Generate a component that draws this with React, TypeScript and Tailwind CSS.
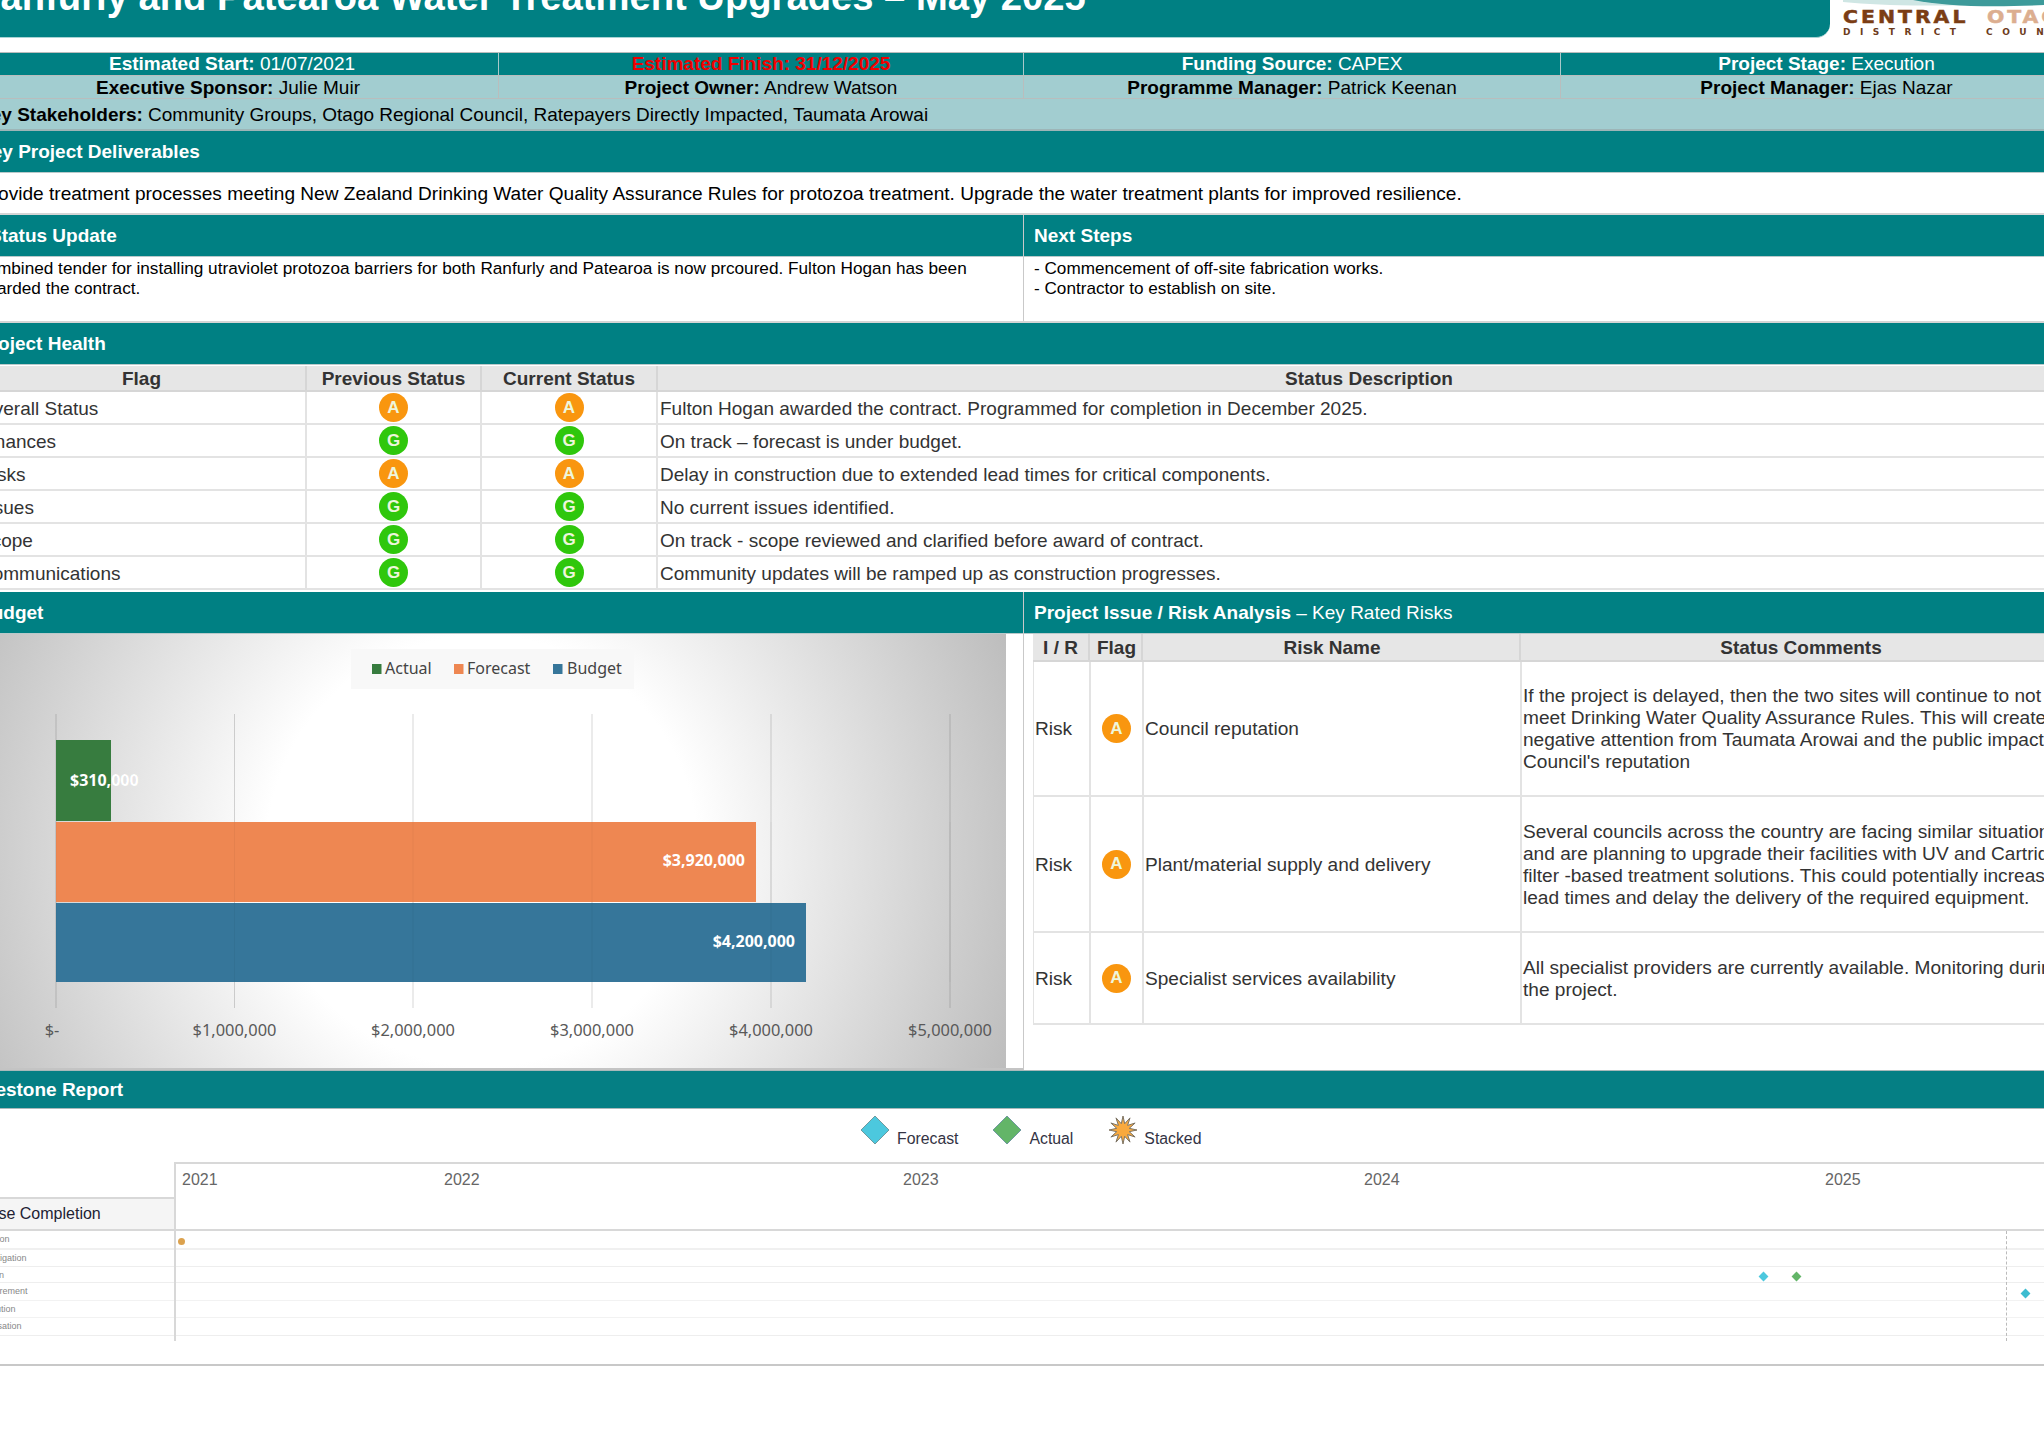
import React from "react";

const Badge = ({ k }: { k: "A" | "G" }) => (
  <span
    className={
      "flex h-[29px] w-[29px] items-center justify-center rounded-full text-[17px] font-bold text-[#eef6dc] " +
      (k === "A" ? "bg-[#f9960f]" : "bg-[#2fc70c]")
    }
  >
    {k}
  </span>
);

const SectionHead = ({ children, pad }: { children: React.ReactNode; pad: string }) => (
  <div
    className={
      "flex h-[42px] items-center border-b border-[#b9c9ca] bg-[#008083] pt-[2px] text-[19px] font-bold text-white " + pad
    }
  >
    {children}
  </div>
);

const health: [string, "A" | "G", "A" | "G", string][] = [
  ["Overall Status", "A", "A", "Fulton Hogan awarded the contract. Programmed for completion in December 2025."],
  ["Finances", "G", "G", "On track – forecast is under budget."],
  ["Risks", "A", "A", "Delay in construction due to extended lead times for critical components."],
  ["Issues", "G", "G", "No current issues identified."],
  ["Scope", "G", "G", "On track - scope reviewed and clarified before award of contract."],
  ["Communications", "G", "G", "Community updates will be ramped up as construction progresses."],
];

const risks = [
  {
    name: "Council reputation",
    h: "h-[135px]",
    lines: [
      "If the project is delayed, then the two sites will continue to not",
      "meet Drinking Water Quality Assurance Rules. This will create",
      "negative attention from Taumata Arowai and the public impacting",
      "Council's reputation",
    ],
  },
  {
    name: "Plant/material supply and delivery",
    h: "h-[136px]",
    lines: [
      "Several councils across the country are facing similar situations",
      "and are planning to upgrade their facilities with UV and Cartridge",
      "filter -based treatment solutions. This could potentially increase",
      "lead times and delay the delivery of the required equipment.",
    ],
  },
  {
    name: "Specialist services availability",
    h: "h-[92px]",
    lines: ["All specialist providers are currently available. Monitoring during", "the project."],
  },
];

const ganttRows = [
  { label: "Initiation", h: "h-[19px]", border: "border-b-2 border-[#f0f0f0]" },
  { label: "Investigation", h: "h-[17px]", border: "border-b border-[#eeeeee]" },
  { label: "Design", h: "h-[16px]", border: "border-b border-[#eeeeee]" },
  { label: "Procurement", h: "h-[18px]", border: "border-b border-[#f2f2f2]" },
  { label: "Execution", h: "h-[17px]", border: "border-b border-[#f2f2f2]" },
  { label: "Finalisation", h: "h-[18px]", border: "border-b border-[#eeeeee]" },
];

const ticks = [
  { x: 56, label: "$-", lx: 52 },
  { x: 234.5, label: "$1,000,000", lx: 234.5 },
  { x: 413, label: "$2,000,000", lx: 413 },
  { x: 592, label: "$3,000,000", lx: 592 },
  { x: 771, label: "$4,000,000", lx: 771 },
  { x: 950, label: "$5,000,000", lx: 950 },
];

const starPoints = Array.from({ length: 24 }, (_, i) => {
  const r = i % 2 === 0 ? 14 : 6.5;
  const a = (i * Math.PI) / 12;
  return `${14 + r * Math.sin(a)},${14 - r * Math.cos(a)}`;
}).join(" ");

const Diamond = ({ fill }: { fill: string }) => (
  <svg width="30" height="30" viewBox="0 0 30 30" className="shrink-0">
    <polygon points="15,1 29,15 15,29 1,15" fill={fill} stroke="#6f9a9f" strokeWidth="1" />
  </svg>
);

export default function App() {
  return (
    <div className="h-[1433px] w-[2044px] overflow-hidden bg-white font-['Liberation_Sans',Arial,sans-serif] text-black">
      <div className="ml-[-42px] flex w-[2134px] flex-col">
        {/* Title band and logo */}
        <div className="flex h-[52px] overflow-hidden">
          <div className="h-[38px] w-[1872px] shrink-0 overflow-hidden rounded-br-[14px] border-b border-[#a9d3d4] bg-[#008083] pl-[15px]">
            <div className="mt-[-24px] whitespace-nowrap text-[38.2px] font-bold leading-[42px] text-white">
              Ranfurly and Patearoa Water Treatment Upgrades – May 2025
            </div>
          </div>
          <div className="relative min-w-0 flex-1 pl-[13px]">
            <svg className="absolute left-[13px] top-0" width="250" height="8" viewBox="0 0 250 8">
              <path d="M0 2 C50 7 110 7 250 0 L250 0 L0 0 Z" fill="#cfe6e4" />
              <path d="M70 0 C110 8 170 8 250 2 L250 0 Z" fill="#3d9a9a" />
            </svg>
            <div className="mt-[8px] origin-left scale-x-[1.2] whitespace-nowrap font-['DejaVu_Sans',sans-serif] text-[17px] font-bold leading-[18px] tracking-[2.5px] text-[#7b3d14] [-webkit-text-stroke:0.5px_#7b3d14]">
              CENTRAL{" "}
              <span className="ml-[7px] text-[#dcae90] [-webkit-text-stroke:0.5px_#dcae90]">OTAGO</span>
            </div>
            <div className="mt-[1px] whitespace-nowrap font-['DejaVu_Sans',sans-serif] text-[9px] font-bold leading-[11px] tracking-[9.5px] text-[#6d3c1c] [word-spacing:8px]">
              DISTRICT COUNCIL
            </div>
          </div>
        </div>

        {/* Project facts */}
        <div className="grid h-[24px] grid-cols-[540px_525px_537px_532px] border-y border-[#b9bdbd] bg-[#008083] text-center text-[19px] leading-[22px] text-white">
          <div className="pl-[8px]">
            <b>Estimated Start:</b> 01/07/2021
          </div>
          <div className="border-l border-[#a8c9ca] text-[#f00000]">
            <b>Estimated Finish: 31/12/2025</b>
          </div>
          <div className="border-l border-[#a8c9ca]">
            <b>Funding Source:</b> CAPEX
          </div>
          <div className="border-l border-[#a8c9ca]">
            <b>Project Stage:</b> Execution
          </div>
        </div>
        <div className="grid h-[23px] grid-cols-[540px_525px_537px_532px] border-b border-[#b9bdbd] bg-[#a2cdd0] text-center text-[19px] leading-[23px]">
          <div>
            <b>Executive Sponsor:</b> Julie Muir
          </div>
          <div className="border-l border-[#b9bdbd]">
            <b>Project Owner:</b> Andrew Watson
          </div>
          <div className="border-l border-[#b9bdbd]">
            <b>Programme Manager:</b> Patrick Keenan
          </div>
          <div className="border-l border-[#b9bdbd]">
            <b>Project Manager:</b> Ejas Nazar
          </div>
        </div>
        <div className="flex h-[32px] items-center border-b-2 border-[#9db5b7] bg-[#a2cdd0] pl-[19px] pt-[2px] text-[19px]">
          <span>
            <b>Key Stakeholders:</b> Community Groups, Otago Regional Council, Ratepayers Directly Impacted, Taumata Arowai
          </span>
        </div>

        {/* Deliverables */}
        <SectionHead pad="pl-[20px]">Key Project Deliverables</SectionHead>
        <div className="flex h-[42px] items-center border-b-2 border-[#d5d5d5] pl-[21px] pt-[2px] text-[19.08px]">
          Provide treatment processes meeting New Zealand Drinking Water Quality Assurance Rules for protozoa treatment.
          Upgrade the water treatment plants for improved resilience.
        </div>

        {/* Status and next steps */}
        <div className="grid h-[108px] grid-cols-[1065px_1069px] border-b-2 border-[#d5d5d5]">
          <div>
            <SectionHead pad="pl-[31px]">Status Update</SectionHead>
            <p className="pl-[17px] pr-[20px] pt-[1px] text-[17.2px] leading-[20px]">
              Combined tender for installing utraviolet protozoa barriers for both Ranfurly and Patearoa is now prcoured.
              Fulton Hogan has been awarded the contract.
            </p>
          </div>
          <div className="border-l border-[#c9c9c9]">
            <SectionHead pad="pl-[10px]">Next Steps</SectionHead>
            <p className="pl-[10px] pt-[1px] text-[17.15px] leading-[20px]">
              - Commencement of off-site fabrication works.
              <br />- Contractor to establish on site.
            </p>
          </div>
        </div>

        {/* Project health */}
        <SectionHead pad="pl-[20px]">Project Health</SectionHead>
        <div className="ml-[17px] w-[2105px] text-[#333333]">
          <div className="mt-[1px] grid h-[26px] grid-cols-[330px_175px_176px_1424px] border-b-2 border-[#d6d6d6] bg-[#e6e6e6] text-center text-[19px] font-bold leading-[25px]">
            <div className="pl-[3px]">Flag</div>
            <div className="border-l-2 border-[#d6d6d6]">Previous Status</div>
            <div className="border-l-2 border-[#d6d6d6]">Current Status</div>
            <div className="border-l-2 border-[#d6d6d6]">Status Description</div>
          </div>
          {health.map(([flag, prev, cur, desc]) => (
            <div
              key={flag}
              className="grid h-[33px] grid-cols-[330px_175px_176px_1424px] border-b-2 border-[#e3e3e3] text-[19px] leading-[33px]"
            >
              <div className="pl-[4px]">{flag}</div>
              <div className="flex items-center justify-center border-l-2 border-[#e3e3e3] pb-[2px]">
                <Badge k={prev} />
              </div>
              <div className="flex items-center justify-center border-l-2 border-[#e3e3e3] pb-[2px]">
                <Badge k={cur} />
              </div>
              <div className="border-l-2 border-[#e3e3e3] pl-[2px]">{desc}</div>
            </div>
          ))}
        </div>

        {/* Budget and risks */}
        <div className="mt-[2px] grid h-[478px] grid-cols-[1065px_1069px]">
          <div>
            <SectionHead pad="pl-[20px]">Budget</SectionHead>
            <div className="flex h-[436px] border-b-2 border-[#c4c4c4]">
              <div className="h-full w-[1048px] bg-[radial-gradient(circle_at_center,#ffffff_38%,#bdbdbd_100%)]">
                <svg width="1048" height="434" viewBox="-42 634 1048 434" className="block">
                  <rect x="351" y="649" width="283" height="40" fill="#f8f8f8" />
                  <rect x="372" y="664" width="9.5" height="10" fill="#377c3f" />
                  <text x="385" y="674" fontSize="16" fill="#444" fontFamily="'Noto Sans',sans-serif">Actual</text>
                  <rect x="454" y="664" width="9.5" height="10" fill="#ee8752" />
                  <text x="467" y="674" fontSize="16" fill="#444" fontFamily="'Noto Sans',sans-serif">Forecast</text>
                  <rect x="553" y="664" width="9.5" height="10" fill="#36769a" />
                  <text x="567" y="674" fontSize="16" fill="#444" fontFamily="'Noto Sans',sans-serif">Budget</text>

                  {ticks.map((t) => (
                    <line key={t.label} x1={t.x} x2={t.x} y1="714" y2="1008" stroke="#000" strokeOpacity="0.16" />
                  ))}
                  <rect x="56" y="740" width="55" height="81" fill="#377c3f" />
                  <rect x="56" y="822" width="700" height="80" fill="#ee8752" />
                  <rect x="56" y="903" width="750" height="79" fill="#36769a" />
                  {ticks.map((t) => (
                    <line key={t.label} x1={t.x} x2={t.x} y1="822" y2="982" stroke="#000" strokeOpacity="0.04" />
                  ))}
                  {ticks.map((t) => (
                    <text key={t.label} x={t.lx} y="1036" textAnchor="middle" fontSize="16.4" fill="#595959" fontFamily="'Noto Sans',sans-serif">
                      {t.label}
                    </text>
                  ))}
                  <text x="70" y="786" fontSize="16" fontWeight="700" fill="#fff" stroke="#000" strokeOpacity="0.08" strokeWidth="0.5" fontFamily="'Noto Sans',sans-serif">$310,000</text>
                  <text x="745" y="866" textAnchor="end" fontSize="16" fontWeight="700" fill="#fff" fontFamily="'Noto Sans',sans-serif">$3,920,000</text>
                  <text x="795" y="947" textAnchor="end" fontSize="16" fontWeight="700" fill="#fff" fontFamily="'Noto Sans',sans-serif">$4,200,000</text>
                </svg>
              </div>
            </div>
          </div>
          <div className="flex flex-col border-l border-[#c9c9c9]">
            <SectionHead pad="pl-[10px]">
              <span>
                Project Issue / Risk Analysis <span className="font-normal">– Key Rated Risks</span>
              </span>
            </SectionHead>
            <div className="ml-[9px] w-[1046px] text-[#333333]">
              <div className="grid h-[28px] grid-cols-[55px_53px_378px_560px] border-b-2 border-[#d6d6d6] bg-[#e6e6e6] text-center text-[19px] font-bold leading-[27px]">
                <div>I / R</div>
                <div className="border-l-2 border-[#d6d6d6] pl-[2px]">Flag</div>
                <div className="border-l-2 border-[#d6d6d6] pl-[2px]">Risk Name</div>
                <div className="border-l-2 border-[#d6d6d6] pl-[2px]">Status Comments</div>
              </div>
              {risks.map((r) => (
                <div
                  key={r.name}
                  className={
                    "grid grid-cols-[55px_53px_378px_560px] border-b-2 border-l border-[#e3e3e3] text-[19.1px] " + r.h
                  }
                >
                  <div className="flex items-center pl-[1px] pt-[2px]">Risk</div>
                  <div className="flex items-center justify-center border-l-2 border-[#e3e3e3]">
                    <Badge k="A" />
                  </div>
                  <div className="flex items-center border-l-2 border-[#e3e3e3] pl-[1px] pt-[2px]">{r.name}</div>
                  <div className="flex flex-col justify-center whitespace-nowrap border-l-2 border-[#e3e3e3] pl-[1px] pt-[1px] leading-[22px]">
                    {r.lines.map((l) => (
                      <span key={l}>{l}</span>
                    ))}
                  </div>
                </div>
              ))}
            </div>
          </div>
        </div>

        {/* Milestones */}
        <div className="flex h-[39px] items-center border-y border-[#a9b9ba] bg-[#057f84] pl-[11px] pt-[2px] text-[19px] font-bold text-white">
          Milestone Report
        </div>
        <div className="flex h-[53px] items-center pb-[12px] pl-[902px] text-[15.8px] text-[#333344]">
          <Diamond fill="#4cc8de" />
          <span className="ml-[7px] mt-[18px]">Forecast</span>
          <span className="ml-[34px] flex items-center">
            <Diamond fill="#63b568" />
            <span className="ml-[7px] mt-[18px]">Actual</span>
          </span>
          <span className="ml-[36px] flex items-center">
            <svg width="28" height="28" viewBox="0 0 28 28" className="shrink-0">
              <polygon points={starPoints} fill="#f9a93d" stroke="#7d7464" strokeWidth="1" />
            </svg>
            <span className="ml-[7px] mt-[18px]">Stacked</span>
          </span>
        </div>

        <div className="flex h-[204px] border-b-2 border-[#c8c8c8]">
          <div className="w-[216px] shrink-0">
            <div className="mt-[35px] flex h-[34px] items-center border-y-2 border-[#d8d8d8] bg-[#f5f5f5] pl-[12px] text-[16px] text-[#222233]">
              Phase Completion
            </div>
            {ganttRows.map((r) => (
              <div
                key={r.label}
                className={"whitespace-nowrap pl-[18px] text-[9px] leading-[17px] text-[#888888] " + r.h + " " + r.border}
              >
                {r.label}
              </div>
            ))}
          </div>
          <div className="h-[179px] flex-1 border-l-2 border-[#d8d8d8]">
            <div className="flex h-[69px] border-y-2 border-[#d8d8d8] pl-[6px] pt-[4px] text-[16px] text-[#666666]">
              <span className="w-[262px]">2021</span>
              <span className="w-[459px]">2022</span>
              <span className="w-[461px]">2023</span>
              <span className="w-[461px]">2024</span>
              <span>2025</span>
            </div>
            <div className="relative">
              {ganttRows.map((r) => (
                <div key={r.label} className={r.h + " " + r.border} />
              ))}
              <span className="absolute left-[2px] top-[7px] h-[7px] w-[7px] rounded-full bg-[#dca24e]" />
              <span className="absolute left-[1584px] top-[42px] h-[7px] w-[7px] rotate-45 bg-[#4cc8de]" />
              <span className="absolute left-[1617px] top-[42px] h-[7px] w-[7px] rotate-45 bg-[#63b568]" />
              <span className="absolute left-[1846px] top-[59px] h-[7px] w-[7px] rotate-45 bg-[#3dbcd0]" />
              <span className="absolute bottom-[-5px] left-[1830px] top-0 border-l border-dashed border-[#bbbbbb]" />
            </div>
          </div>
        </div>
      </div>
    </div>
  );
}
